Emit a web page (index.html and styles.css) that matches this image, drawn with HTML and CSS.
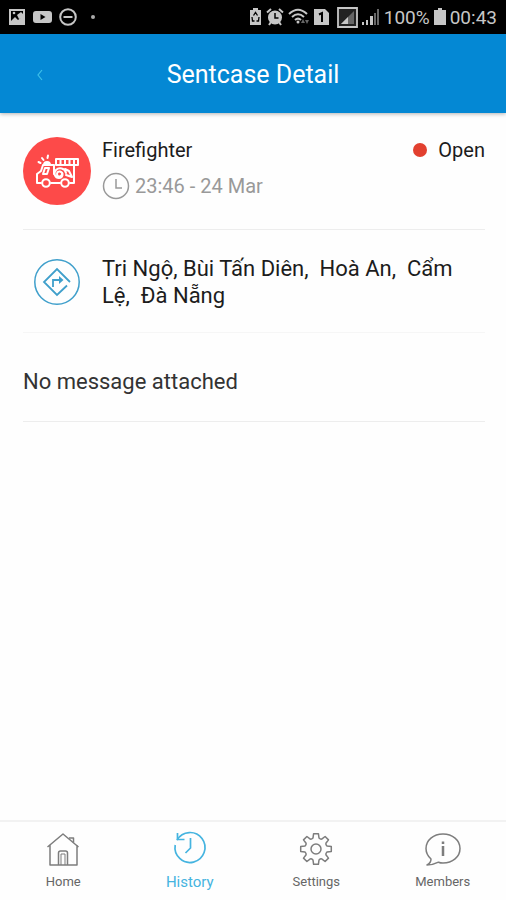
FILE: index.html
```html
<!DOCTYPE html>
<html lang="en">
<head>
  <meta charset="UTF-8" />
  <meta name="viewport" content="width=device-width, initial-scale=1.0" />
  <title>Sentcase Detail</title>
  <link rel="stylesheet" href="styles.css">
</head>
<body>
  <div class="status-bar">
    <div class="status-group status-left">
      <svg width="18" height="18" viewBox="0 0 18 18">
        <path fill="currentColor" fill-rule="evenodd" d="M1 1h16v16H1zM3 3v10l4-4 3 3 5-4V3z" />
        <circle cx="6" cy="5" r="1.300" fill="currentColor" />
        <path fill="currentColor" d="M9 7l4-3 2 2v4l-4 1z" />
      </svg>
      <svg width="19" height="18" viewBox="0 0 19 18">
        <path fill="currentColor" fill-rule="evenodd" d="M3 3h13q3 0 3 3v6q0 3-3 3H3q-3 0-3-3V6q0-3 3-3zM7.500 6v6l5-3z" />
      </svg>
      <svg width="18" height="18" viewBox="0 0 18 18" fill="none" stroke="currentColor" stroke-width="2">
        <circle cx="9" cy="9" r="7.800" />
        <path d="M4.500 9h9" />
      </svg>
      <span class="status-dot"></span>
    </div>
    <div class="status-group">
      <svg width="13" height="18" viewBox="0 0 13 18">
        <path fill="currentColor" d="M4 0h5v2h3v15H1V2h3z" />
        <path fill="none" stroke="#000" stroke-width="1.300" d="M4.500 7.500l2-3 2 3M3 9l.5 4h2M10 9l-.5 4h-2" />
      </svg>
      <svg width="18" height="18" viewBox="0 0 18 18">
        <circle cx="9" cy="9.500" r="7" fill="currentColor" />
        <path fill="none" stroke="currentColor" stroke-width="2" d="M1 4.500L5 1M17 4.500L13 1M3 17l2-3M15 17l-2-3" />
        <path fill="none" stroke="#000" stroke-width="1.500" d="M9 5v5h3.500" />
      </svg>
      <svg width="22" height="18" viewBox="0 0 22 18">
        <path fill="none" stroke="currentColor" stroke-width="2" d="M1 6q9-8.500 18 0M4 9q6-5.500 12 0M7 12q3-2.800 6 0" />
        <circle cx="10" cy="14" r="1.500" fill="currentColor" />
        <path fill="#666" d="M13 15l2-4 2 4zM17 12h4l-2 4z" />
      </svg>
      <svg width="15" height="18" viewBox="0 0 15 18">
        <path fill="currentColor" d="M0 1h11l4 4v12H0z" />
        <path fill="none" stroke="#000" stroke-width="2" d="M5 6.500l3-1.500v9" />
      </svg>
      <svg class="sim-signal" width="21" height="21" viewBox="0 0 21 21">
        <path fill="#222" stroke="currentColor" stroke-width="1.800" d="M1 1h19v19H1z" />
        <path fill="#666" d="M17 4v13H4z" />
        <path fill="currentColor" d="M11 10v7H4z" />
      </svg>
      <svg width="18" height="18" viewBox="0 0 18 18">
        <path fill="currentColor" d="M0 14h2v3H0zM4 12h2v5H4zM8 8h3v9H8z" />
        <path fill="#666" d="M12 5h2v12h-2zM15 1h2v16h-2z" />
      </svg>
      <span class="status-text">100%</span>
      <svg width="12" height="18" viewBox="0 0 12 18">
        <path fill="currentColor" d="M4 0h4v2h4v15H0V2h4z" />
      </svg>
      <span class="status-text">00:43</span>
    </div>
  </div>

  <header class="header">
    <button class="back" aria-label="Back">
      <svg width="8" height="12" viewBox="0 0 8 12" fill="none" stroke="currentColor" stroke-width="1.200">
        <path d="M6 1L2 6l4 5" />
      </svg>
    </button>
    <h1>Sentcase Detail</h1>
  </header>

  <main class="content">
    <section class="case">
      <div class="case-icon">
        <svg width="44" height="34" viewBox="0 0 44 34" fill="none" stroke="currentColor" stroke-width="2" stroke-linecap="round" stroke-linejoin="round">
          <!-- siren -->
          <path d="M3.500 8l2 1M7 4l1.500 2M13 1.500l-.5 2.500" />
          <path fill="currentColor" d="M9 11q0-3 3-3t3 3z" />
          <!-- ladder -->
          <path d="M21 5h22M21 11h22M21 5v6M25.500 5v6M30 5v6M34.500 5v6M39 5v6M43 5v6" />
          <!-- cab and body -->
          <path d="M6 29H2v-9l4-3 2-6h11v9M8 20h4l2-6h-4zM39 11v18h-4M25 29h-9" />
          <!-- hose -->
          <path d="M27 20a2.500 2.500 0 1 1-2-2.500c4 1 3 6.500-1 6.500s-6-5-3-8 9-2 10 3M30 15l4 2 3 6-6-2" />
          <circle cx="11" cy="29" r="3.800" />
          <circle cx="30" cy="29" r="3.800" />
        </svg>
      </div>
      <div class="case-info">
        <div class="case-top">
          <h2>Firefighter</h2>
          <span class="state">Open</span>
        </div>
        <div class="case-time">
          <svg width="28" height="28" viewBox="0 0 28 28" fill="none" stroke="currentColor" stroke-width="1.500">
            <circle cx="14" cy="14" r="12.500" />
            <path d="M14 7v9h6" />
          </svg>
          <time>23:46 - 24 Mar</time>
        </div>
      </div>
    </section>

    <section class="address">
      <div class="address-icon">
        <svg width="48" height="48" viewBox="0 0 48 48" fill="none" stroke="currentColor" stroke-width="1.500">
          <circle cx="24" cy="24" r="22.200" />
          <path stroke-width="1.800" d="M37 24L24 11 11 24l13 13 10-9.500" />
          <path stroke-width="1.800" d="M20 29v-7h8" />
          <path fill="currentColor" stroke="none" d="M26 18l4.500 4-4.500 4z" />
        </svg>
      </div>
      <p>Tri Ngộ, Bùi Tấn Diên,&nbsp; Hoà An,&nbsp; Cẩm Lệ,&nbsp; Đà Nẵng</p>
    </section>

    <section class="message">
      <p>No message attached</p>
    </section>
  </main>

  <nav class="tabs">
    <a class="tab" href="#home">
      <svg width="36" height="36" viewBox="0 0 36 36" fill="none" stroke="currentColor" stroke-width="1.500" stroke-linejoin="round">
        <path d="M2.500 16L18 3l15.500 13M5 14v20h27V14M13.500 34V22q0-2 2-2h5q2 0 2 2v12" />
        <path stroke-width="1" d="M16 34V23h4v11" />
        <path d="M24 7h4.500v4.500" />
      </svg>
      <span>Home</span>
    </a>
    <a class="tab active" href="#history">
      <svg width="36" height="36" viewBox="0 0 36 36" fill="none" stroke="currentColor" stroke-width="1.700">
        <path d="M5 9A15 15 0 1 1 3.200 14" />
        <path d="M5.500 2v6.500h7M18.500 7v10l-5 5" />
      </svg>
      <span>History</span>
    </a>
    <a class="tab" href="#settings">
      <svg width="36" height="36" viewBox="-18 -18 36 36" fill="none" stroke="currentColor" stroke-width="1.500" stroke-linejoin="round">
        <path d="M-3-11L-2.400-15.300H2.400L3-11Q4.400-9.600 5.700-9.900L9.100-12.500 12.500-9.100 9.900-5.700Q9.600-4.400 11-3L15.300-2.400V2.400L11 3Q9.600 4.400 9.900 5.700L12.500 9.100 9.100 12.500 5.700 9.900Q4.400 9.600 3 11L2.400 15.300H-2.400L-3 11Q-4.400 9.600-5.700 9.900L-9.100 12.500-12.500 9.100-9.900 5.700Q-9.600 4.400-11 3L-15.300 2.400V-2.400L-11-3Q-9.600-4.400-9.900-5.700L-12.500-9.100-9.100-12.500-5.700-9.900Q-4.400-9.600-3-11z" />
        <circle r="5" />
      </svg>
      <span>Settings</span>
    </a>
    <a class="tab" href="#members">
      <svg width="36" height="36" viewBox="0 0 36 36" fill="none" stroke="currentColor" stroke-width="1.500" stroke-linejoin="round">
        <path d="M6 28Q1 23.500 1 17.500C1 9 8.500 3 18 3s17 6 17 14.500S27.500 32 18 32q-2.500 0-4.500-.8Q8 34 2 34q4-2 4-6z" />
        <path stroke-width="2.500" d="M18 15v10M18 10.500v2.500" />
      </svg>
      <span>Members</span>
    </a>
  </nav>
</body>
</html>
```

FILE: styles.css
```css
:root {
  --blue: #0488d4;
  --red: #fd4a49;
  --text: #1c1c1c;
  --muted: #999;
  --line: #ededed;
  --icon: #7d7d7d;
  --active: #45b4e0;
}

* {
  box-sizing: border-box;
  margin: 0;
  padding: 0;
}

body {
  display: flex;
  flex-direction: column;
  min-height: 100vh;
  font-family: Roboto, "Noto Sans", sans-serif;
  background: #fefefe;
  color: var(--text);
}

svg {
  display: block;
  flex-shrink: 0;
}

.status-bar {
  display: flex;
  justify-content: space-between;
  align-items: center;
  height: 34px;
  padding: 0 9px 0 8px;
  background: #000;
  color: #c6c6c6;
}

.status-group {
  display: flex;
  align-items: center;
  gap: 4px;
}

.status-left {
  gap: 7px;
}

.status-dot {
  width: 4px;
  height: 4px;
  margin-left: 7px;
  border-radius: 50%;
  background: #aaa;
}

.sim-signal {
  margin-left: 4px;
}

.status-text {
  font-size: 19px;
}

.header {
  display: grid;
  grid-template-columns: 48px 1fr 48px;
  align-items: center;
  height: 79px;
  padding: 2px 16px 0;
  background: var(--blue);
  color: #fff;
  box-shadow: 0 1px 4px rgba(0,0,0,0.3);
}

.header h1 {
  grid-column: 2;
  font-size: 25px;
  font-weight: 400;
  text-align: center;
}

.back {
  display: flex;
  justify-content: center;
  align-items: center;
  height: 48px;
  border: none;
  background: transparent;
  color: #3fc0e8;
  cursor: pointer;
}

.content {
  flex: 1;
  padding: 0 21px 0 23px;
}

.case {
  display: flex;
  gap: 11px;
  padding: 24px 0;
  border-bottom: 1px solid var(--line);
}

.case-icon {
  display: flex;
  justify-content: center;
  align-items: center;
  flex-shrink: 0;
  width: 68px;
  height: 68px;
  border-radius: 50%;
  background: var(--red);
  color: #fff;
}

.case-info {
  flex: 1;
}

.case-top {
  display: flex;
  justify-content: space-between;
  align-items: center;
  font-size: 20px;
  line-height: 26px;
}

.case-top h2 {
  font-size: 20px;
  font-weight: 400;
}

.state {
  display: flex;
  align-items: center;
  gap: 11px;
}

.state::before {
  content: "";
  width: 14px;
  height: 14px;
  border-radius: 50%;
  background: #e2402f;
}

.case-time {
  display: flex;
  align-items: center;
  gap: 5px;
  margin-top: 9px;
  font-size: 20px;
  color: var(--muted);
}

.address {
  display: flex;
  align-items: center;
  gap: 11px;
  padding: 25px 0 23px;
  border-bottom: 1px solid #f6f6f6;
}

.address-icon {
  display: flex;
  justify-content: center;
  flex-shrink: 0;
  width: 68px;
  color: #3f9fcb;
}

.address p {
  font-size: 22px;
  line-height: 27px;
}

.message {
  padding: 35px 0 26px;
  border-bottom: 1px solid var(--line);
}

.message p {
  font-size: 22px;
  line-height: 27px;
  color: #333;
}

.tabs {
  display: flex;
  height: 80px;
  border-top: 2px solid #f2f2f2;
}

.tab {
  flex: 1;
  display: flex;
  flex-direction: column;
  align-items: center;
  gap: 6px;
  padding-top: 9px;
  font-size: 13px;
  line-height: 18px;
  color: #666;
  text-decoration: none;
}

.tab svg {
  color: var(--icon);
}

.tab.active {
  font-size: 15px;
}

.tab.active,
.tab.active svg {
  color: var(--active);
}
```
